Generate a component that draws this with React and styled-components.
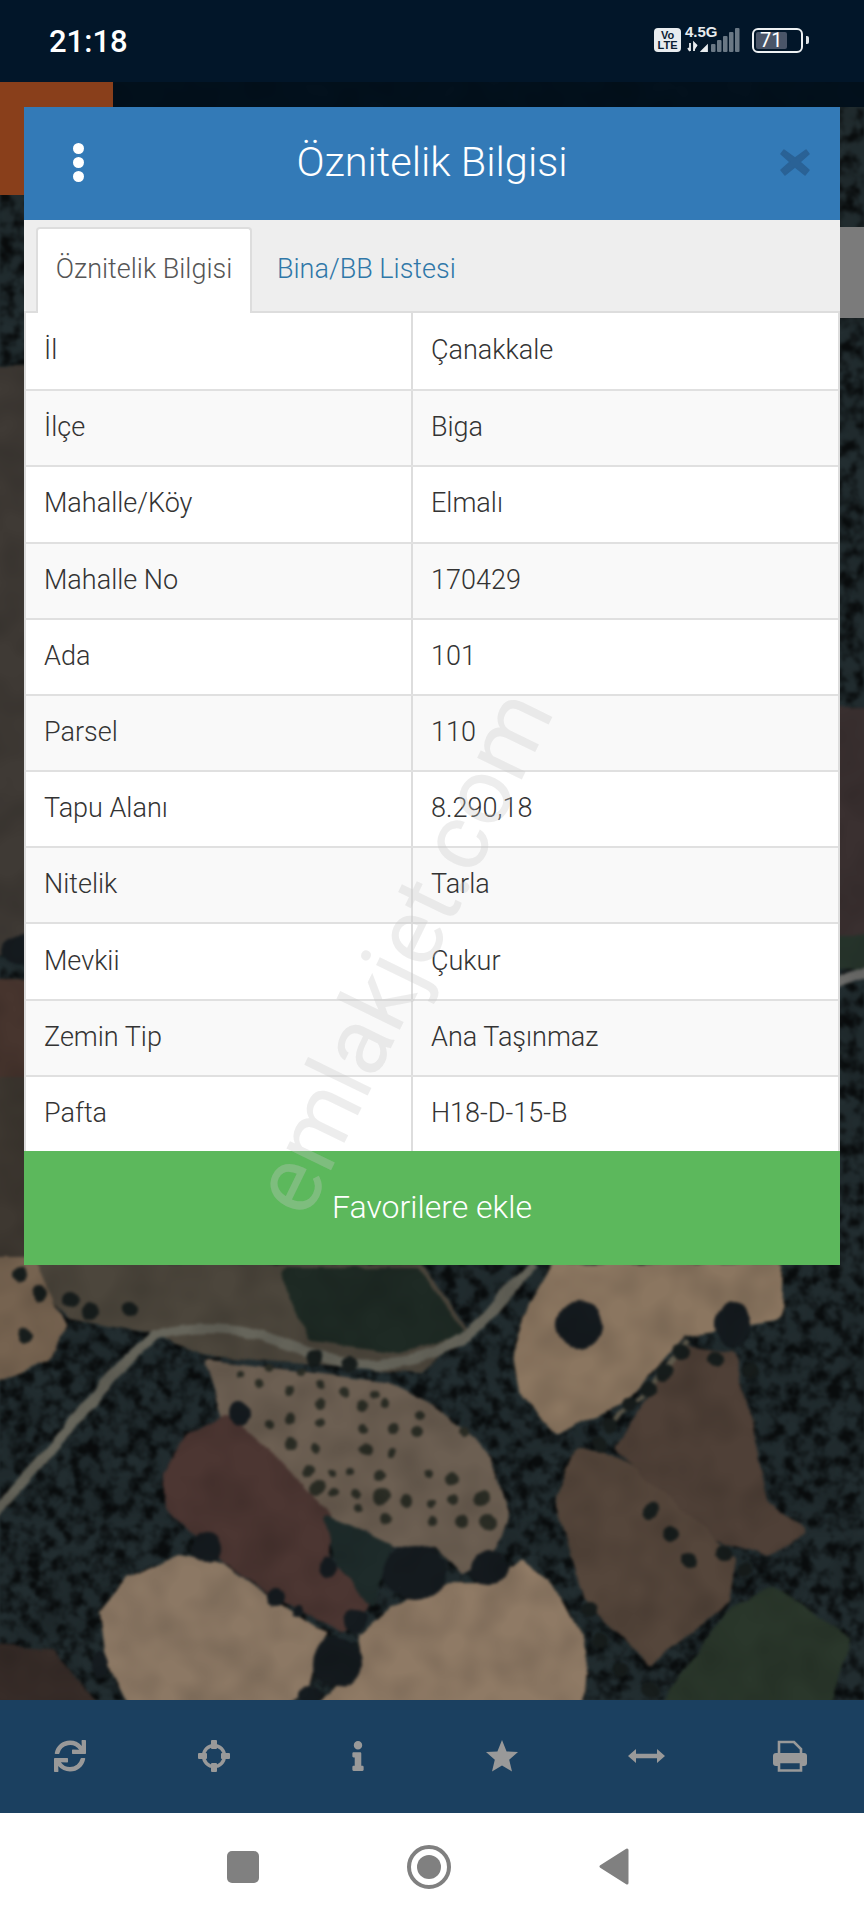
import React from 'react'
import styled, { createGlobalStyle } from 'styled-components'
import { FaSync, FaInfo } from 'react-icons/fa'

const GlobalStyle = createGlobalStyle`
  html, body {
    margin: 0;
    padding: 0;
    background: #021629;
  }
  * {
    box-sizing: border-box;
  }
`

const Page = styled.div`
  position: relative;
  width: 864px;
  height: 1920px;
  overflow: hidden;
  display: flex;
  flex-direction: column;
  font-family: Roboto, "Noto Sans", sans-serif;
  font-weight: 300;
  color: #333;
`

const StatusBar = styled.div`
  height: 82px;
  flex: none;
  background: #021629;
  display: flex;
  align-items: center;
  justify-content: space-between;
  padding: 0 55px 0 49px;
  color: #fff;
`

const Clock = styled.div`
  font-size: 31px;
  font-weight: 500;
`

const StatusIcons = styled.div`
  display: flex;
  align-items: center;
  margin-top: -2px;
`

const VoLte = styled.div`
  width: 27px;
  height: 24px;
  border-radius: 4px;
  background: #e8ecef;
  color: #0b2033;
  font-size: 11px;
  line-height: 10px;
  font-weight: 700;
  font-family: "Liberation Sans", sans-serif;
  text-align: center;
  padding-top: 2px;
`

const Network = styled.div`
  position: relative;
  width: 55px;
  height: 26px;
  margin-left: 4px;
  margin-right: 12px;
`

const NetLabel = styled.div`
  position: absolute;
  left: 0;
  top: -3px;
  font-size: 15px;
  line-height: 15px;
  font-weight: 700;
  font-family: "Liberation Sans", sans-serif;
  color: #e8ecef;
`

const NetSvg = styled.svg`
  display: block;
`

const Battery = styled.div`
  position: relative;
  width: 51px;
  height: 25px;
  border: 2.5px solid #eef1f3;
  border-radius: 6px;
  padding: 2px;
`

const BatteryFill = styled.div`
  height: 100%;
  background: #4a5568;
  border-radius: 2px;
  color: #fff;
  font-size: 20px;
  line-height: 16px;
  font-weight: 400;
  text-align: center;
`

const BatteryTip = styled.div`
  width: 3px;
  height: 8px;
  margin-left: 3px;
  background: #dfe4e8;
  border-radius: 0 2px 2px 0;
`

const MapArea = styled.div`
  position: relative;
  flex: none;
  height: 1618px;
  padding: 25px 24px 0;
  background: #161c20;
`

const MapDrawing = styled.svg`
  position: absolute;
  inset: 0;
  width: 100%;
  height: 100%;
`

const OrangeBlock = styled.div`
  position: absolute;
  left: 0;
  top: 0;
  width: 113px;
  height: 113px;
  background: #893f1b;
`

const ScrollStub = styled.div`
  position: absolute;
  right: 0;
  top: 145px;
  width: 24px;
  height: 91px;
  background: #7b7b7b;
`

const Modal = styled.div`
  position: relative;
  height: 1158px;
  display: flex;
  flex-direction: column;
  background: #fff;
`

const ModalHeader = styled.div`
  height: 113px;
  flex: none;
  background: #337ab7;
  color: #fff;
  display: grid;
  grid-template-columns: 100px 1fr 100px;
  align-items: center;
`

const Dots = styled.div`
  display: flex;
  flex-direction: column;
  align-items: center;
  gap: 3px;
  padding-left: 8px;
  padding-bottom: 3px;
`

const Dot = styled.span`
  width: 11px;
  height: 11px;
  border-radius: 50%;
  background: #fff;
`

const ModalTitle = styled.div`
  text-align: center;
  font-size: 41.5px;
  font-weight: 300;
  padding-bottom: 5px;
`

const CloseIcon = styled.svg`
  justify-self: end;
  margin-right: 30px;
  margin-top: -3px;
`

const TabBar = styled.div`
  height: 93px;
  flex: none;
  background: #eee;
  border-bottom: 2px solid #ddd;
  padding: 7px 0 0 12px;
  display: flex;
  align-items: stretch;
`

const Tab = styled.div`
  width: ${p => (p.$active ? '216px' : 'auto')};
  height: ${p => (p.$active ? '86px' : 'auto')};
  padding: ${p => (p.$active ? '0 0 4px' : '0')};
  padding-left: ${p => (p.$active ? '0' : '25px')};
  display: flex;
  align-items: center;
  justify-content: ${p => (p.$active ? 'center' : 'flex-start')};
  background: ${p => (p.$active ? '#fff' : 'transparent')};
  border: ${p => (p.$active ? '2px solid #ddd' : 'none')};
  border-bottom: none;
  border-radius: 4px 4px 0 0;
  color: ${p => (p.$active ? '#555' : '#2f77a8')};
  font-size: 27px;
  font-weight: 300;
`

const AttributeTable = styled.div`
  height: 838px;
  flex: none;
  display: grid;
  grid-template-rows: repeat(11, 1fr);
  border-left: 2px solid #ddd;
  border-right: 2px solid #ddd;
`

const Row = styled.div`
  display: grid;
  grid-template-columns: 385px 1fr;
  background: ${p => (p.$striped ? '#f9f9f9' : '#fff')};
  & + & {
    border-top: 2px solid #e0e0e0;
  }
`

const Cell = styled.div`
  display: flex;
  align-items: center;
  padding: 0 0 2px 18px;
  font-size: 27px;
  color: #333;
  & + & {
    border-left: 2px solid #ddd;
  }
`

const FavoriteButton = styled.div`
  flex: 1;
  background: #5cb85c;
  color: #fff;
  font-size: 32px;
  display: flex;
  align-items: center;
  justify-content: center;
  padding-bottom: 2px;
`

const Toolbar = styled.div`
  height: 113px;
  flex: none;
  background: #1b4060;
  display: grid;
  grid-template-columns: repeat(6, 1fr);
  align-items: center;
  justify-items: center;
  padding: 0 0 2px;
  color: #999;
`

const ToolItem = styled.div`
  display: flex;
  align-items: center;
  justify-content: center;
  width: 40px;
  height: 40px;
  margin-left: -4px;
`

const NavBar = styled.div`
  flex: 1;
  background: #fff;
  display: flex;
  align-items: center;
  justify-content: center;
  gap: 148px;
  padding-right: 9px;
`

const NavSquare = styled.div`
  width: 32px;
  height: 32px;
  border-radius: 5px;
  background: #808080;
`

const NavCircle = styled.div`
  width: 44px;
  height: 44px;
  border-radius: 50%;
  border: 4px solid #808080;
  display: flex;
  align-items: center;
  justify-content: center;
  &::after {
    content: '';
    width: 24px;
    height: 24px;
    border-radius: 50%;
    background: #808080;
  }
`

const Watermark = styled.div`
  position: absolute;
  left: 402px;
  top: 952px;
  transform: translate(-50%, -50%) rotate(-64deg);
  font-size: 94px;
  font-weight: 400;
  line-height: 1;
  white-space: nowrap;
  color: rgba(200, 200, 200, 0.32);
  pointer-events: none;
`

const rows = [
  ['İl', 'Çanakkale'],
  ['İlçe', 'Biga'],
  ['Mahalle/Köy', 'Elmalı'],
  ['Mahalle No', '170429'],
  ['Ada', '101'],
  ['Parsel', '110'],
  ['Tapu Alanı', '8.290,18'],
  ['Nitelik', 'Tarla'],
  ['Mevkii', 'Çukur'],
  ['Zemin Tip', 'Ana Taşınmaz'],
  ['Pafta', 'H18-D-15-B'],
]

// field polygons of the satellite picture, in page coordinates
const fields = [
  ['#3f3a35', '-20,370 60,370 60,950 -20,950'],
  ['#47352e', '-20,985 60,985 60,1082 -20,1082'],
  ['#3e3831', '-20,1082 60,1082 60,1270 -20,1300'],
  ['#3a3030', '830,713 884,713 884,940 830,940'],
  ['#27352c', '830,940 884,940 884,965 830,965'],
  ['#4c463c', '36,1268 420,1268 462,1332 420,1368 210,1350 150,1328 70,1314'],
  ['#766350', '-10,1262 32,1262 60,1326 46,1356 -10,1380'],
  ['#8b7660', '556,1268 778,1268 776,1316 683,1332 620,1400 558,1428 524,1392 518,1355 534,1305'],
  ['#6c5f52', '210,1365 386,1387 433,1410 483,1453 503,1513 493,1543 463,1568 440,1543 390,1543 367,1527 330,1517 273,1457 226,1415'],
  ['#4c3632', '227,1420 273,1460 328,1517 323,1560 365,1600 343,1627 273,1590 223,1554 170,1507 168,1473 190,1440'],
  ['#8c7864', '180,1560 220,1566 267,1600 322,1637 310,1660 304,1687 280,1704 133,1704 110,1657 104,1613 130,1583'],
  ['#8f7a65', '523,1564 558,1602 583,1650 578,1704 325,1704 360,1667 365,1637 395,1610 450,1588 493,1588'],
  ['#4f4037', '683,1350 730,1356 746,1421 764,1505 800,1530 770,1552 689,1526 622,1446 648,1408'],
  ['#55463b', '578,1454 617,1460 730,1559 724,1600 650,1660 588,1596 560,1497'],
  ['#2a372b', '771,1590 844,1640 826,1704 665,1704 727,1618'],
  ['#372c28', '-10,1650 50,1654 92,1704 -10,1704'],
  ['#1e2a24', '285,1272 416,1272 458,1332 400,1348 312,1336'],
  ['#1e2b2a', '330,1522 385,1548 372,1600 340,1560'],
]

const roads = [
  ['M-10 1518 L55 1446 L110 1377 L154 1336 C190 1325 225 1328 248 1332 C300 1345 340 1372 386 1363 C430 1362 470 1340 496 1305 L534 1262', '#66655b', 10],
  ['M830 985 L884 966', '#6c6c6a', 11],
  ['M688 1340 L640 1400 L615 1420', '#5f5a4c', 5],
]

const bigTrees = [
  [579, 1325, 23, 23], [733, 1325, 19, 22], [207, 1547, 14, 15], [337, 1663, 24, 24], [30, 950, 30, 16],
  [415, 1572, 32, 28], [490, 1567, 20, 18], [355, 1620, 12, 12], [327, 1567, 8, 11], [277, 1597, 8, 8],
  [297, 1610, 5, 6], [240, 1413, 10, 13], [100, 1665, 8, 14], [310, 1695, 12, 8],
]

// small trees along the field edges
const edgeTrees = [
  [20, 1275], [40, 1292], [70, 1300], [90, 1312], [130, 1310], [315, 1358], [350, 1365],
  [680, 1352], [665, 1372], [650, 1388], [630, 1405], [610, 1425], [600, 1445],
  [650, 1510], [670, 1535], [690, 1560], [725, 1552], [745, 1570], [590, 1610], [600, 1640],
  [620, 1670], [25, 1335], [650, 1690], [715, 1358], [750, 1370],
]

// orchard trees, read off the picture
const olives = [
  [268, 1423, 4], [291, 1420, 6], [320, 1422, 5], [363, 1430, 5], [393, 1430, 6], [417, 1430, 6], [463, 1433, 5],
  [292, 1445, 6], [317, 1450, 5], [367, 1450, 6], [390, 1453, 4], [307, 1470, 6], [330, 1473, 4], [350, 1473, 4],
  [378, 1475, 6], [428, 1473, 4], [452, 1478, 7], [317, 1488, 7], [333, 1493, 5], [357, 1495, 5], [382, 1497, 8],
  [405, 1500, 6], [432, 1505, 4], [453, 1500, 5], [482, 1498, 8], [357, 1508, 4], [387, 1520, 6], [433, 1522, 5],
  [462, 1522, 7], [487, 1522, 8], [385, 1405, 5], [363, 1405, 5], [320, 1403, 5], [420, 1413, 5],
  [260, 1385, 4], [290, 1392, 5], [320, 1385, 4], [345, 1392, 5], [375, 1395, 4],
  [240, 1375, 4], [270, 1368, 4], [300, 1372, 4],
]

function SatelliteMap() {
  return (
    <MapDrawing viewBox="0 82 864 1618" preserveAspectRatio="none">
      <defs>
        <filter id="rough" filterUnits="userSpaceOnUse" x="-40" y="82" width="944" height="1660" colorInterpolationFilters="sRGB">
          <feTurbulence type="fractalNoise" baseFrequency="0.035" numOctaves="2" seed="7" result="n" />
          <feDisplacementMap in="SourceGraphic" in2="n" scale="9" xChannelSelector="R" yChannelSelector="G" />
          <feGaussianBlur stdDeviation="1.5" />
        </filter>
        <filter id="speckle" filterUnits="userSpaceOnUse" x="0" y="82" width="864" height="1618">
          <feTurbulence type="fractalNoise" baseFrequency="0.07" numOctaves="3" seed="3" />
          <feColorMatrix values="0 0 0 0 0 0 0 0 0 0 0 0 0 0 0 0 0 0 3 -1.2" />
          <feGaussianBlur stdDeviation="1.3" />
        </filter>
        <filter id="grain" filterUnits="userSpaceOnUse" x="0" y="82" width="864" height="1618">
          <feTurbulence type="fractalNoise" baseFrequency="0.025" numOctaves="2" seed="11" />
          <feColorMatrix values="0 0 0 0 0 0 0 0 0 0 0 0 0 0 0 0 0 0 2 -0.7" />
        </filter>
      </defs>
      <rect x="0" y="82" width="864" height="1618" fill="#222d30" />
      <rect x="0" y="107" width="864" height="1593" filter="url(#speckle)" opacity="0.7" />
      <rect x="0" y="82" width="864" height="25" fill="#03111d" />
      <g filter="url(#rough)">
        {fields.map(([fill, points], i) => (
          <polygon key={i} fill={fill} stroke={fill} strokeWidth="10" strokeLinejoin="round" points={points} />
        ))}
        {roads.map(([d, stroke, w], i) => (
          <path key={i} d={d} stroke={stroke} strokeWidth={w} fill="none" />
        ))}
        {bigTrees.map(([cx, cy, rx, ry], i) => (
          <ellipse key={i} cx={cx} cy={cy} rx={rx} ry={ry} fill="#151b1f" />
        ))}
        {edgeTrees.map(([cx, cy], i) => (
          <circle key={i} cx={cx} cy={cy} r={8} fill="#171d1c" />
        ))}
        {olives.map(([cx, cy, r], i) => (
          <circle key={i} cx={cx} cy={cy} r={r} fill="#2b2d25" />
        ))}
      </g>
      <rect x="0" y="107" width="864" height="1593" filter="url(#grain)" opacity="0.12" />
    </MapDrawing>
  )
}

function CrosshairIcon() {
  return (
    <svg width="32" height="32" viewBox="0 0 32 32" fill="#999">
      <circle cx="16" cy="16" r="10.5" fill="none" stroke="#999" strokeWidth="3.4" />
      <rect x="13" y="0" width="6" height="9" rx="1" />
      <rect x="13" y="23" width="6" height="9" rx="1" />
      <rect x="0" y="13" width="9" height="6" rx="1" />
      <rect x="23" y="13" width="9" height="6" rx="1" />
    </svg>
  )
}

function StarIcon() {
  return (
    <svg width="34" height="34" viewBox="0 0 34 34">
      <path d="M17 1 L21.6 12.4 L33 13 L24.2 20.8 L27 32.5 L17 26.4 L7 32.5 L9.8 20.8 L1 13 L12.4 12.4 Z" fill="#999" />
    </svg>
  )
}

function ArrowsIcon() {
  return (
    <svg width="37" height="14" viewBox="0 0 37 14">
      <path d="M0 7 L8 0 V4.8 H29 V0 L37 7 L29 14 V9.2 H8 V14 Z" fill="#999" />
    </svg>
  )
}

function PrintIcon() {
  return (
    <svg width="34" height="32" viewBox="0 0 34 32">
      <path d="M6 14V2h15l7 7v5" fill="none" stroke="#999" strokeWidth="2.6" />
      <rect x="0" y="13" width="34" height="13" rx="3" fill="#999" />
      <path d="M6 22h22v8.5H6z" fill="#1b4060" stroke="#999" strokeWidth="2.6" />
    </svg>
  )
}

export default function App() {
  return (
    <Page>
      <GlobalStyle />
      <StatusBar>
        <Clock>21:18</Clock>
        <StatusIcons>
          <VoLte>Vo<br />LTE</VoLte>
          <Network>
            <NetLabel>4.5G</NetLabel>
            <NetSvg width="55" height="26" viewBox="0 0 55 26">
              <path d="M5 16v8M3 21l2 3M9 24v-8l3 3M17 24l5-5v5z" stroke="#e8ecef" strokeWidth="1.8" fill="#e8ecef" />
              <g fill="#6a7885">
                <rect x="26" y="17" width="4.5" height="8" rx="1" />
                <rect x="32" y="13" width="4.5" height="12" rx="1" />
                <rect x="38" y="9" width="4.5" height="16" rx="1" />
                <rect x="44" y="5" width="4.5" height="20" rx="1" />
                <rect x="50" y="1" width="4.5" height="24" rx="1" />
              </g>
            </NetSvg>
          </Network>
          <Battery>
            <BatteryFill style={{ width: '71%' }}>71</BatteryFill>
          </Battery>
          <BatteryTip />
        </StatusIcons>
      </StatusBar>

      <MapArea>
        <SatelliteMap />
        <OrangeBlock />
        <ScrollStub />
        <Modal>
          <ModalHeader>
            <Dots><Dot /><Dot /><Dot /></Dots>
            <ModalTitle>Öznitelik Bilgisi</ModalTitle>
            <CloseIcon width="30" height="32" viewBox="0 0 30 32">
              <path d="M4 4 L15 12 L26 4 L29 8 L20 16 L29 24 L25 29 L15 21 L5 29 L1 24 L10 16 L1 8 Z" fill="#2a6296" stroke="#2a6296" strokeWidth="1.5" strokeLinejoin="round" />
            </CloseIcon>
          </ModalHeader>
          <TabBar>
            <Tab $active>Öznitelik Bilgisi</Tab>
            <Tab>Bina/BB Listesi</Tab>
          </TabBar>
          <AttributeTable>
            {rows.map(([label, value], i) => (
              <Row key={label} $striped={i % 2 === 1}>
                <Cell>{label}</Cell>
                <Cell>{value}</Cell>
              </Row>
            ))}
          </AttributeTable>
          <FavoriteButton>Favorilere ekle</FavoriteButton>
        </Modal>
      </MapArea>

      <Toolbar>
        <ToolItem><FaSync size={32} /></ToolItem>
        <ToolItem><CrosshairIcon /></ToolItem>
        <ToolItem><FaInfo size={30} /></ToolItem>
        <ToolItem><StarIcon /></ToolItem>
        <ToolItem><ArrowsIcon /></ToolItem>
        <ToolItem><PrintIcon /></ToolItem>
      </Toolbar>

      <NavBar>
        <NavSquare />
        <NavCircle />
        <svg width="30" height="37" viewBox="0 0 30 37">
          <path d="M28 2 V35 L2 18.5 Z" fill="#808080" stroke="#808080" strokeWidth="3" strokeLinejoin="round" />
        </svg>
      </NavBar>

      <Watermark>emlakjet.com</Watermark>
    </Page>
  )
}
